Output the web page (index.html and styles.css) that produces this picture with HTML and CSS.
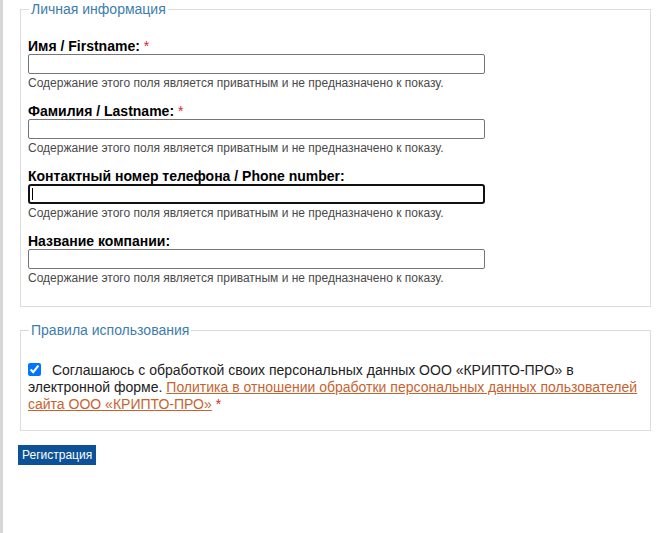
FILE: index.html
```html
<!DOCTYPE html>
<html lang="ru">
<head>
  <meta charset="UTF-8">
  <title>Регистрация</title>
  <link rel="stylesheet" href="styles.css">
</head>
<body>
  <div class="page">
    <form class="reg-form">
      <fieldset class="group">
        <legend>Личная информация</legend>
        <div class="field first">
          <label for="fname">Имя / Firstname: <span class="req">*</span></label>
          <input type="text" id="fname">
          <div class="desc">Содержание этого поля является приватным и не предназначено к показу.</div>
        </div>
        <div class="field">
          <label for="lname">Фамилия / Lastname: <span class="req">*</span></label>
          <input type="text" id="lname">
          <div class="desc">Содержание этого поля является приватным и не предназначено к показу.</div>
        </div>
        <div class="field">
          <label for="phone">Контактный номер телефона / Phone number:</label>
          <input type="text" id="phone" class="active">
          <div class="desc">Содержание этого поля является приватным и не предназначено к показу.</div>
        </div>
        <div class="field">
          <label for="company">Название компании:</label>
          <input type="text" id="company">
          <div class="desc">Содержание этого поля является приватным и не предназначено к показу.</div>
        </div>
      </fieldset>

      <fieldset class="group rules">
        <legend>Правила использования</legend>
        <div class="agree">
          <input type="checkbox" id="agree" checked>
          <label for="agree">Соглашаюсь с обработкой своих персональных данных ООО «КРИПТО-ПРО» в электронной форме.</label>
          <a href="#">Политика в отношении обработки персональных данных пользователей сайта ООО «КРИПТО-ПРО»</a> <span class="req">*</span>
        </div>
      </fieldset>

      <button type="button" class="submit">Регистрация</button>
    </form>
  </div>
</body>
</html>
```

FILE: styles.css
```css
*{
  box-sizing: border-box;
}
html, body{
  margin: 0;
  padding: 0;
  background: #fff;
}
body{
  font-family: "Liberation Sans", Arial, sans-serif;
  color: #000;
}
.page{
  min-height: 533px;
  border-left: 3px solid #d6d6d6;
  padding: 0 5px 0 15px;
}
.group{
  margin: 0 0 0 2px;
  width: 631px;
  border: 1px solid #dcdcdc;
  padding: 0 7px 21px 7px;
}
.group legend{
  font-size: 14px;
  line-height: 18px;
  color: #3c7dab;
  padding: 0 2px;
  margin-left: 1px;
}
.field{
  margin-top: 13px;
}
.field.first{
  margin-top: 20px;
}
.field label{
  display: block;
  font-size: 14px;
  font-weight: bold;
  line-height: 16px;
}
.req{
  color: #d22;
  font-weight: normal;
}
.field input{
  display: block;
  width: 457px;
  height: 20px;
  margin: 0;
  border: 1px solid #767676;
  border-radius: 2px;
  font-size: 13px;
  padding: 1px 3px;
}
.field input.active{
  border: 2px solid #111;
  border-radius: 3px;
  background: linear-gradient(#000, #000) no-repeat 2px 2px / 1px 12px;
}
.desc{
  font-size: 12px;
  line-height: 14px;
  margin-top: 2px;
  color: #4a4a4a;
}
.rules{
  margin-top: 14px;
  padding-bottom: 17px;
}
.agree{
  margin-top: 23px;
  font-size: 14px;
  line-height: 17px;
  color: #222;
}
.agree input{
  width: 13px;
  height: 13px;
  margin: 0 7px 0 0;
  vertical-align: -1px;
}
.agree a{
  color: #c8632f;
}
.submit{
  display: block;
  margin-top: 14px;
  background: #0d5196;
  color: #fff;
  border: 0;
  border-radius: 0;
  font-family: "Liberation Sans", Arial, sans-serif;
  font-size: 12px;
  height: 20px;
  padding: 0 4px;
}
```
